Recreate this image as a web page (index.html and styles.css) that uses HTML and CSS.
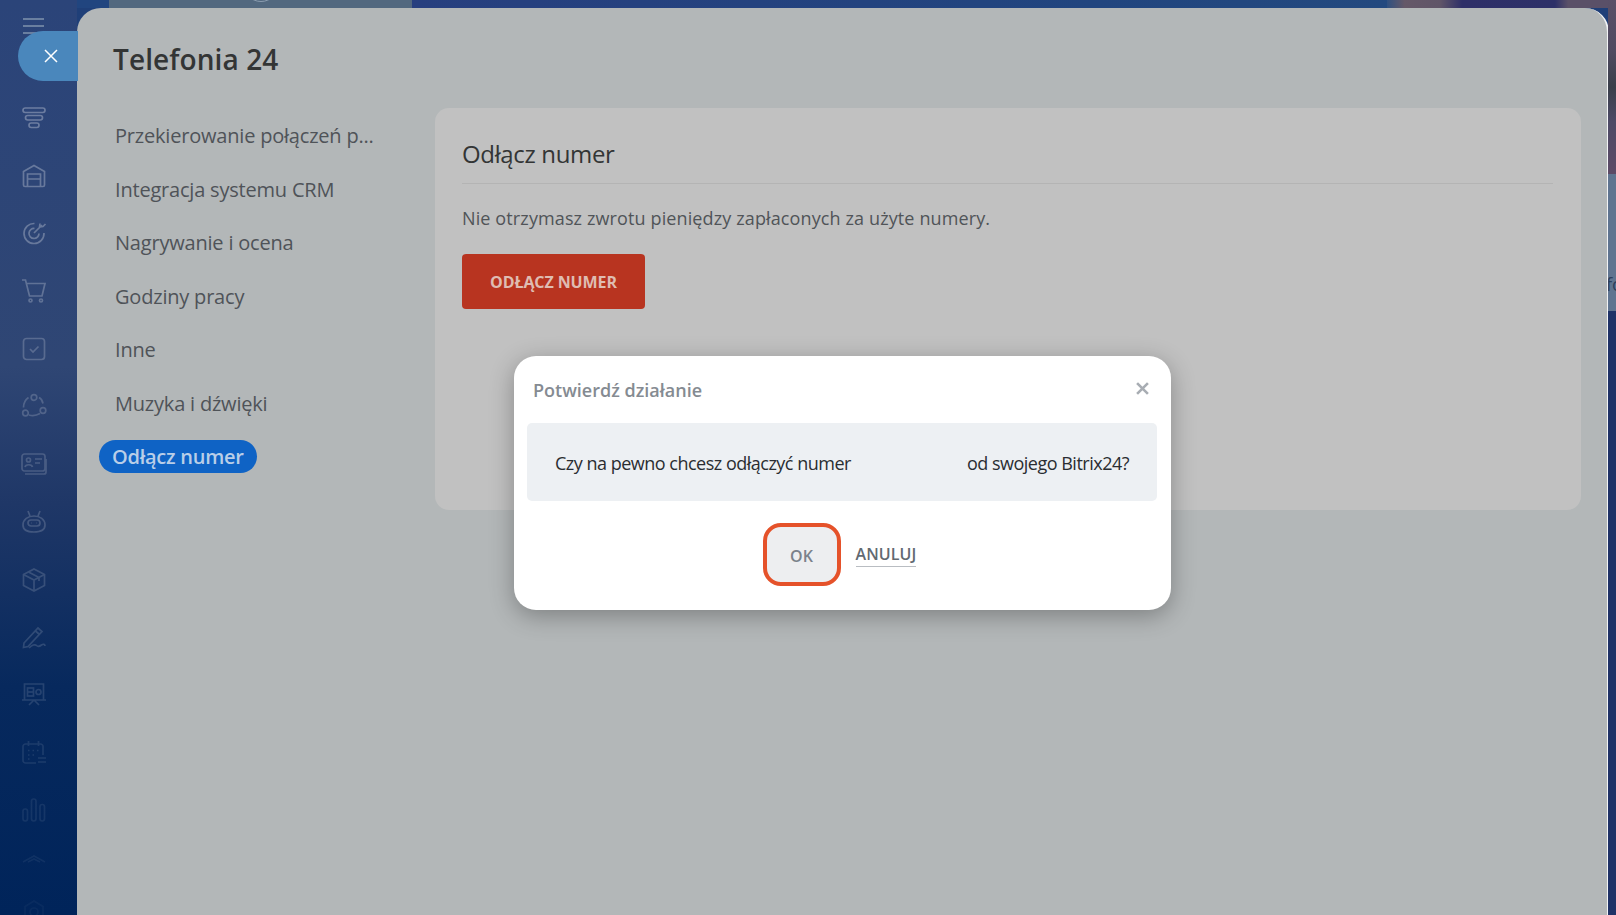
FILE: index.html
```html
<!DOCTYPE html>
<html lang="pl">
<head>
<meta charset="utf-8">
<title>Telefonia 24</title>
<link rel="stylesheet" href="styles.css">
</head>
<body>
<div class="app">
  <aside class="sidebar">
    <div class="burger"><i></i><i></i><i></i></div>
    <div class="rail">
      <svg viewBox="0 0 24 24"><rect x="1" y="2" width="22" height="4.500" rx="2.200"/><rect x="3.500" y="9.500" width="17" height="4.500" rx="2.200"/><rect x="7" y="17" width="10" height="4.500" rx="2.200"/></svg>
      <svg viewBox="0 0 24 24"><path d="M1.500 7.500 12 1.500l10.500 6V21a1.500 1.500 0 0 1-1.500 1.500H3A1.500 1.500 0 0 1 1.500 21z"/><path d="M5.500 22.500V10h13v12.500M5.500 15h13"/></svg>
      <svg viewBox="0 0 24 24"><path d="M12.500 2.500A10 10 0 1 0 22 12"/><path d="M12.500 7.500A5 5 0 1 0 17 12.500"/><path d="M12 12 20 4M18 2.500l-.5 3.500 3.500-.5L23.500 3"/></svg>
      <svg viewBox="0 0 24 24"><path d="M0 1h3.500l4 16h12.500l3-12.500H4.500"/><circle cx="8.500" cy="21.500" r="1.500"/><circle cx="19" cy="21.500" r="1.500"/></svg>
      <svg viewBox="0 0 24 24"><rect x="1.500" y="1.500" width="21" height="21" rx="3"/><path d="m8 12 3 3 5.500-5.500"/></svg>
      <svg viewBox="0 0 24 24"><circle cx="12" cy="3.500" r="2.800"/><circle cx="3.500" cy="19" r="2.800"/><circle cx="21" cy="16.500" r="2.800"/><path d="M6.500 3.500C3 6 1.500 10 1.500 13.500M17 3.500c2 1 3.500 3 4 6M7 21c3.500 1 7.500.5 11-1.500"/></svg>
      <svg viewBox="0 0 24 24"><rect x="0" y="2" width="23" height="17" rx="2.500"/><path d="M3 22h19a2 2 0 0 0 2-2V7"/><circle cx="6.500" cy="8" r="2"/><path d="M3 15c.5-3 7-3 7.500 0M13 7h7M13 11h5"/></svg>
      <svg viewBox="0 0 24 24"><path d="M6 1l2 5M18 1l-2 5"/><path d="M1 15c0-5.500 5-9 11-9s11 3.500 11 9c0 4.500-3 7-11 7S1 19.500 1 15z"/><rect x="6" y="10" width="12" height="6" rx="3"/><path d="M9.500 13h.5M14 13h.5"/></svg>
      <svg viewBox="0 0 24 24"><path d="M12 1 22.500 6.500v11L12 23 1.500 17.500v-11z"/><path d="M1.500 6.500 12 12l10.500-5.500M12 12v11M6.500 4 17 9.500V13"/></svg>
      <svg viewBox="0 0 24 24"><path d="M2 18 16 3l4 3.500L6 21.500l-4.500 1z"/><path d="m13.500 6 4 3.500M7 23c3-3 6-4 7.500-2.500s3 1 5-.5 3.500-.5 3.500 1"/></svg>
      <svg viewBox="0 0 24 24"><path d="M2.500 1h19v16h-19zM0 17h24M12 17l-5 5M12 17l5 5"/><rect x="5.500" y="5" width="6" height="8"/><circle cx="16.500" cy="9" r="2.500"/><path d="M5.500 9h6"/></svg>
      <svg viewBox="0 0 24 24"><path d="M14 22H3.500A2.500 2.500 0 0 1 1 19.500V5.500A2.500 2.500 0 0 1 3.500 3h15A2.500 2.500 0 0 1 21 5.500V14M6.500 0v5M16.500 0v5M16 17h8M16 21h8"/><path d="M6 9.500h1.500M10.500 9.500H12M15 9.500h1.500M6 14h1.500M10.500 14H12M6 18h1.500"/></svg>
      <svg viewBox="0 0 24 24"><rect x="1" y="11" width="4.500" height="12" rx="2.200"/><rect x="9.500" y="1" width="4.500" height="22" rx="2.200"/><rect x="18" y="6.500" width="4.500" height="16.500" rx="2.200"/></svg>
      <svg viewBox="0 0 24 24"><path d="M1 6 12 0l11 6M6 6l6-3 6 3"/></svg>
      <svg viewBox="0 0 24 24"><path d="M12-13 21-7.500v11L12 9 3 3.500v-11z"/><circle cx="12" cy="-2" r="4"/></svg>
    </div>
    <button class="close-tab" type="button" aria-label="Zamknij">
      <svg viewBox="0 0 14 14"><path d="M1 1l12 12M13 1 1 13"/></svg>
    </button>
  </aside>

  <div class="stage">
    <div class="topstrip">
      <div class="strip-block"><span class="strip-arc"></span></div>
      <div class="strip-blue"></div>
      <div class="strip-photo"></div>
    </div>
    <main class="panel">
      <h1 class="title">Telefonia 24</h1>
      <div class="columns">
        <nav class="menu">
          <a class="item">Przekierowanie połączeń p...</a>
          <a class="item">Integracja systemu CRM</a>
          <a class="item">Nagrywanie i ocena</a>
          <a class="item">Godziny pracy</a>
          <a class="item">Inne</a>
          <a class="item">Muzyka i dźwięki</a>
          <a class="item active">Odłącz numer</a>
        </nav>
        <section class="card">
          <h2 class="card-title">Odłącz numer</h2>
          <p class="card-text">Nie otrzymasz zwrotu pieniędzy zapłaconych za użyte numery.</p>
          <button class="danger" type="button">ODŁĄCZ NUMER</button>
        </section>
      </div>
    </main>
  </div>

  <div class="edge">
    <div class="edge-photo"></div>
    <div class="edge-block"><span class="edge-text">fo</span></div>
    <div class="edge-dark"></div>
  </div>

  <div class="dialog" role="dialog">
    <header class="dialog-head">
      <span class="dialog-title">Potwierdź działanie</span>
      <svg class="dialog-x" viewBox="0 0 12 12"><path d="M1 1l10 10M11 1 1 11"/></svg>
    </header>
    <div class="message"><span>Czy na pewno chcesz odłączyć numer</span><span>od swojego Bitrix24?</span></div>
    <div class="actions">
      <button class="ok" type="button">OK</button>
      <a class="cancel">ANULUJ</a>
    </div>
  </div>
</div>
</body>
</html>
```
FILE: styles.css
```css
* { box-sizing: border-box; }
html, body { margin: 0; padding: 0; height: 100%; overflow: hidden; }
body { font-family: "Open Sans", "Noto Sans", sans-serif; }

.app {
  position: relative;
  display: flex;
  width: 1616px;
  height: 915px;
  overflow: hidden;
  background: #1f3f78;
}

/* sidebar */
.sidebar {
  position: relative;
  flex: 0 0 77px;
  padding-top: 18px;
  background: linear-gradient(180deg, #2b4479 0%, #2f4674 40%, #1f3767 55%, #07295d 75%, #00245a 100%);
}
.burger {
  display: flex;
  flex-direction: column;
  gap: 5px;
  width: 21px;
  margin-left: 23px;
}
.burger i { display: block; height: 2px; background: #6a7fa0; }

.rail {
  display: flex;
  flex-direction: column;
  gap: 33.700px;
  margin-top: 72px;
  padding-left: 22px;
}
.rail svg {
  display: block;
  width: 24px;
  height: 24px;
  fill: none;
  stroke: #fff;
  stroke-width: 1.700;
  overflow: visible;
}
.rail svg:nth-child(1) { opacity: .3; }
.rail svg:nth-child(2) { opacity: .28; }
.rail svg:nth-child(3) { opacity: .28; }
.rail svg:nth-child(4) { opacity: .24; }
.rail svg:nth-child(5) { opacity: .2; }
.rail svg:nth-child(6) { opacity: .18; }
.rail svg:nth-child(7) { opacity: .17; }
.rail svg:nth-child(8) { opacity: .17; }
.rail svg:nth-child(9) { opacity: .15; }
.rail svg:nth-child(10) { opacity: .14; }
.rail svg:nth-child(11) { opacity: .12; }
.rail svg:nth-child(12) { opacity: .09; }
.rail svg:nth-child(13) { opacity: .07; }
.rail svg:nth-child(14) { opacity: .06; }
.rail svg:nth-child(15) { opacity: .03; }

.close-tab {
  position: absolute;
  top: 31px;
  left: 18px;
  width: 60px;
  height: 50px;
  padding: 0;
  border: 0;
  border-radius: 25px 0 0 25px;
  background: #4a87bc;
  display: flex;
  align-items: center;
  justify-content: center;
}
.close-tab svg { width: 14px; height: 14px; margin-left: 6px; fill: none; stroke: #fff; stroke-width: 1.500; }

/* centre */
.stage { flex: 1 1 auto; display: flex; flex-direction: column; min-width: 0; }
.topstrip { flex: 0 0 8px; display: flex; background: #21457f; overflow: hidden; }
.strip-block { position: relative; flex: 0 0 303px; margin-left: 32px; background: #52687f; overflow: hidden; }
.strip-arc {
  position: absolute;
  left: 134px;
  top: -34px;
  width: 36px;
  height: 36px;
  border: 1px solid #8b9cb0;
  border-radius: 50%;
}
.strip-blue { flex: 0 0 975px; background: linear-gradient(90deg, #273f7f 0%, #21457f 70%, #23497f 100%); }
.strip-photo {
  flex: 1 1 auto;
  background: linear-gradient(90deg, #2f5080 0%, #655868 8%, #605568 24%, #2e2f68 34%, #2d3068 76%, #5a5068 82%, #5a5068 100%);
}

.panel {
  flex: 1 1 auto;
  padding: 0 26px 0 36px;
  background: #b3b7b8;
  border-radius: 24px 24px 0 0;
  border-right: 2px solid #f2f3f5;
  margin-right: -1px;
}
.title {
  margin: 31px 0 0;
  font-size: 28px;
  line-height: 40px;
  font-weight: 600;
  letter-spacing: .1px;
  color: #333535;
}
.columns { display: flex; margin-top: 29px; }

.menu {
  flex: 0 0 322px;
  display: flex;
  flex-direction: column;
  gap: 26.600px;
  align-items: flex-start;
  padding-top: 14px;
}
.item {
  font-size: 20px;
  line-height: 27px;
  letter-spacing: -.2px;
  color: #4f5358;
  white-space: nowrap;
  margin-left: 2px;
}
.item.active {
  margin: -4px 0 0 -14px;
  padding: 3px 13px;
  height: 33px;
  line-height: 27px;
  border-radius: 17px;
  background: #0f63c5;
  color: #b9cee8;
  font-weight: 600;
  letter-spacing: -.25px;
}

.card {
  flex: 1 1 auto;
  height: 402px;
  padding: 28px 28px 0 27px;
  border-radius: 14px;
  background: #c1c1c1;
}
.card-title {
  margin: 0;
  padding-bottom: 11px;
  border-bottom: 1px solid #b4b4b4;
  font-size: 24px;
  line-height: 36px;
  font-weight: 400;
  letter-spacing: -.35px;
  color: #333535;
}
.card-text {
  margin: 21px 0 0;
  font-size: 18px;
  line-height: 26px;
  letter-spacing: .12px;
  color: #505458;
}
.danger {
  display: block;
  width: 183px;
  height: 55px;
  margin-top: 23px;
  padding: 0;
  border: 0;
  border-radius: 4px;
  background: #b83420;
  color: #dfbcb2;
  font-family: inherit;
  font-size: 16px;
  font-weight: 700;
  letter-spacing: -.1px;
}

/* right edge */
.edge { flex: 0 0 8px; display: flex; flex-direction: column; }
.edge-photo {
  flex: 0 0 174px;
  background: linear-gradient(180deg, #5a5068 0%, #4f4a60 30%, #3a3f4a 50%, #4d4a66 70%, #5d4a66 100%);
}
.edge-block { flex: 0 0 137px; position: relative; overflow: hidden; background: #5f7490; }
.edge-text {
  position: absolute;
  left: -2px;
  top: 98px;
  font-size: 18px;
  line-height: 24px;
  color: #2c3f5c;
}
.edge-dark { flex: 1 1 auto; background: #1f3267; }

/* dialog */
.dialog {
  position: absolute;
  left: 514px;
  top: 356px;
  width: 657px;
  height: 254px;
  padding: 0 14px 0 13px;
  border-radius: 22px;
  background: #fff;
  box-shadow: 0 6px 24px rgba(0, 0, 0, .3);
}
.dialog-head {
  display: flex;
  align-items: center;
  justify-content: space-between;
  height: 67px;
  padding: 0 8px 0 6px;
}
.dialog-title {
  font-size: 18px;
  font-weight: 600;
  letter-spacing: 0;
  color: #858b92;
}
.dialog-x { width: 13px; height: 13px; margin-top: -3px; fill: none; stroke: #a8adb3; stroke-width: 2.400; }
.message {
  display: flex;
  justify-content: space-between;
  align-items: center;
  height: 78px;
  padding: 1px 28px 0 28px;
  border-radius: 5px;
  background: #edf0f3;
  font-size: 18px;
  letter-spacing: -.5px;
  color: #2a2d31;
  white-space: nowrap;
}
.actions {
  display: flex;
  align-items: center;
  justify-content: center;
  gap: 15px;
  margin-top: 22px;
  padding-right: 5px;
}
.ok {
  width: 78px;
  height: 63px;
  padding: 2px 0 0;
  border: 4.500px solid #e5522a;
  border-radius: 18px;
  background: #edeef0;
  color: #7b828b;
  font-family: inherit;
  font-size: 16px;
  font-weight: 600;
}
.cancel {
  padding-bottom: 1px;
  border-bottom: 1px solid #b9bdc2;
  font-size: 16px;
  line-height: 22px;
  font-weight: 600;
  letter-spacing: .1px;
  color: #626971;
}
```
